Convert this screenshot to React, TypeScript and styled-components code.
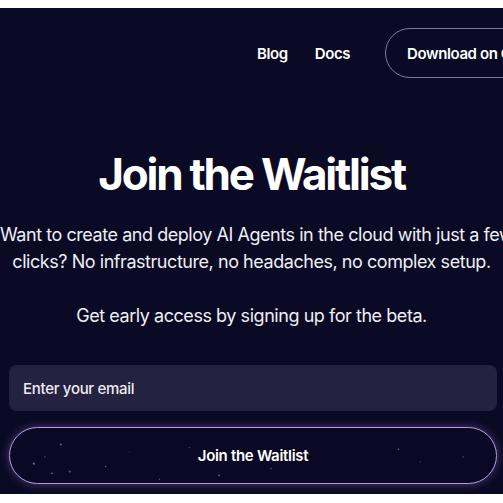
import styled, { createGlobalStyle } from 'styled-components';

const GlobalStyle = createGlobalStyle`
  html, body {
    background: #ffffff;
  }
  body {
    margin: 8px 0 0;
    overflow: hidden;
    font-family: Inter, 'Noto Sans', sans-serif;
  }
`;

const Page = styled.main`
  height: 486px;
  background: #0b0a24;
  color: #ffffff;
  overflow: hidden;
  display: flex;
  flex-direction: column;
`;

const Header = styled.header`
  display: flex;
  align-items: center;
  padding: 20px 0 0 257px;
`;

const NavLink = styled.a`
  font-size: 15px;
  font-weight: 600;
  letter-spacing: -0.4px;
  color: #ffffff;
  text-decoration: none;
  margin-right: ${(p: { $gap: number }) => p.$gap}px;
  flex-shrink: 0;
`;

const DownloadButton = styled.button`
  flex-shrink: 0;
  height: 50px;
  padding: 0 21px;
  border-radius: 25px;
  border: 1px solid rgba(220, 215, 240, 0.55);
  background: transparent;
  color: #ffffff;
  font-family: inherit;
  font-size: 15px;
  font-weight: 600;
  letter-spacing: -0.4px;
  white-space: nowrap;
`;

const Hero = styled.section`
  display: flex;
  flex-direction: column;
  align-items: center;
  text-align: center;
`;

const Title = styled.h1`
  margin: 71px 0 0;
  font-size: 44px;
  line-height: 50px;
  font-weight: 700;
  letter-spacing: -2.2px;
`;

const Lead = styled.p`
  margin: 22px 0 0;
  width: 100%;
  font-size: 18px;
  line-height: 27px;
  font-weight: 400;
  letter-spacing: -0.45px;
  color: #efeef6;
  white-space: nowrap;
`;

const Form = styled.form`
  display: flex;
  flex-direction: column;
  gap: 16px;
  margin-top: 36px;
  padding: 0 6px 0 9px;
`;

const EmailInput = styled.input`
  height: 46px;
  box-sizing: border-box;
  border: none;
  border-radius: 8px;
  background: #24223f;
  padding: 0 14px;
  color: #ffffff;
  font-family: inherit;
  font-size: 15px;
  font-weight: 500;
  letter-spacing: -0.3px;
  outline: none;

  &::placeholder {
    color: #ecebf4;
    opacity: 1;
  }
`;

const SubmitButton = styled.button`
  position: relative;
  height: 57px;
  border-radius: 999px;
  border: 1.5px solid #b69cd8;
  background: #0a0824;
  box-shadow: 0 0 8px rgba(160, 120, 220, 0.45);
  color: #ffffff;
  font-family: inherit;
  font-size: 15px;
  font-weight: 600;
  letter-spacing: -0.3px;
  overflow: hidden;
`;

const Sparkles = styled.svg`
  position: absolute;
  inset: 0;
  width: 100%;
  height: 100%;
  pointer-events: none;
`;

const ButtonLabel = styled.span`
  position: relative;
`;

const dots = [
  [24, 37, 1.2], [51, 17, 1], [42, 47, 0.9], [60, 45, 1], [35, 30, 0.7],
  [96, 40, 0.8], [150, 53, 0.7], [180, 20, 0.6], [210, 49, 0.9], [262, 42, 0.7],
  [300, 27, 0.6], [390, 22, 0.8], [412, 35, 0.6], [455, 30, 0.7], [120, 25, 0.5],
];

export default function App() {
  return (
    <>
      <GlobalStyle />
      <Page>
        <Header>
          <NavLink href="#" $gap={27}>Blog</NavLink>
          <NavLink href="#" $gap={35}>Docs</NavLink>
          <DownloadButton>Download on Chrome</DownloadButton>
        </Header>
        <Hero>
          <Title>Join the Waitlist</Title>
          <Lead>
            Want to create and deploy AI Agents in the cloud with just a few
            <br />
            clicks? No infrastructure, no headaches, no complex setup.
            <br />
            <br />
            Get early access by signing up for the beta.
          </Lead>
        </Hero>
        <Form onSubmit={(e) => e.preventDefault()}>
          <EmailInput type="email" placeholder="Enter your email" />
          <SubmitButton type="submit">
            <Sparkles viewBox="0 0 488 57" preserveAspectRatio="none">
              {dots.map(([x, y, r], i) => (
                <circle key={i} cx={x} cy={y} r={r} fill="#8f86c4" opacity={0.7} />
              ))}
            </Sparkles>
            <ButtonLabel>Join the Waitlist</ButtonLabel>
          </SubmitButton>
        </Form>
      </Page>
    </>
  );
}
